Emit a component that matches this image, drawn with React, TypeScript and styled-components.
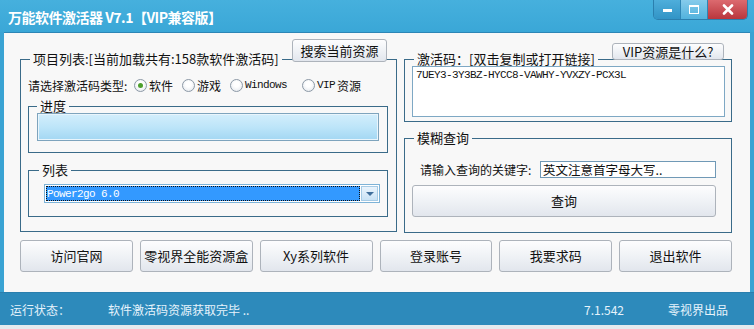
import React from 'react';
import styled, { createGlobalStyle } from 'styled-components';

const GlobalStyle = createGlobalStyle`
  html, body {
    margin: 0;
    padding: 0;
    background: #e4eaee;
  }
  body {
    font-family: "Noto Sans CJK SC", "Liberation Sans", sans-serif;
    font-size: 12px;
    color: #111;
  }
  * {
    box-sizing: border-box;
  }
`;

const Window = styled.div`
  width: 754px;
  height: 325px;
  display: flex;
  flex-direction: column;
  background: #3aa3d3;
`;

const TitleBar = styled.div`
  height: 32px;
  flex: none;
  display: flex;
  justify-content: space-between;
  padding-left: 8px;
  background: linear-gradient(#46b0dd, #3aa7d7);
`;

const Title = styled.div`
  align-self: center;
  color: #fff;
  font-size: 14px;
  font-weight: bold;
  letter-spacing: -0.5px;
  line-height: 16px;
  margin-top: 2px;
`;

const CaptionButtons = styled.div`
  display: flex;
  height: 20px;
  margin-right: 6px;
  border: 1px solid #2b7fae;
  border-top: none;
  border-radius: 0 0 5px 5px;
  overflow: hidden;
`;

const captionBg = {
  min: 'linear-gradient(#4eaedb, #3294c6)',
  max: 'linear-gradient(#86cbeb, #52b2dd)',
  close: 'linear-gradient(#dc6a6f, #b9363d)',
};

const CaptionButton = styled.div<{ $kind: 'min' | 'max' | 'close' }>`
  width: ${(p) => (p.$kind === 'close' ? 40 : p.$kind === 'max' ? 27 : 26)}px;
  display: flex;
  align-items: center;
  justify-content: center;
  background: ${(p) => captionBg[p.$kind]};
  border-left: ${(p) => (p.$kind === 'min' ? 'none' : '1px solid #2f86b5')};
`;

const MinGlyph = styled.span`
  width: 9px;
  height: 3px;
  background: #fff;
  margin-top: 2px;
`;

const MaxGlyph = styled.span`
  width: 10px;
  height: 9px;
  border: 1px solid #fff;
  border-top-width: 2px;
`;

const Body = styled.div`
  flex: 1;
  margin: 0 4px;
  background: #f8f8f8;
  border-top: 1px solid #2d86b6;
  padding: 19px 18px 0 16px;
  display: flex;
  flex-direction: column;
`;

const Columns = styled.div`
  display: grid;
  grid-template-columns: 377px 328px;
  gap: 7px;
  align-items: start;
`;

const RightCol = styled.div`
  display: flex;
  flex-direction: column;
  gap: 9px;
`;

const Group = styled.fieldset<{ $mt?: number }>`
  position: relative;
  margin: ${(p) => p.$mt ?? 0}px 0 0;
  padding: 0;
  min-width: 0;
  border: 1px solid #3a6b89;
`;

const Legend = styled.legend<{ $indent?: number }>`
  margin-left: ${(p) => p.$indent ?? 9}px;
  padding: 0 3px;
  font-size: 13px;
  line-height: 14px;
  color: #111;
`;

const GroupBody = styled.div<{ $pad: string }>`
  padding: ${(p) => p.$pad};
`;

const Button = styled.button<{ $h?: number; $full?: boolean }>`
  height: ${(p) => p.$h ?? 32}px;
  width: ${(p) => (p.$full ? '100%' : 'auto')};
  margin: 0;
  padding: 0;
  border: 1px solid #adb3bb;
  border-radius: 3px;
  background: linear-gradient(#fdfdfe, #eef1f5 55%, #e2e6ed);
  font-family: "Noto Sans CJK SC", "Liberation Sans", sans-serif;
  font-size: 13px;
  line-height: 14px;
  color: #111;
  white-space: nowrap;
`;

/* sits across the group's top border, like the WinForms original */
const HeaderButton = styled(Button)<{ $w: number; $top: number; $right: number }>`
  position: absolute;
  width: ${(p) => p.$w}px;
  top: ${(p) => p.$top}px;
  right: ${(p) => p.$right}px;
`;

const RadioRow = styled.div`
  display: flex;
  align-items: center;
  height: 20px;
`;

const RadioCaption = styled.span`
  width: 106px;
  white-space: nowrap;
`;

const RadioItem = styled.label<{ $w?: number }>`
  display: flex;
  align-items: center;
  gap: 2px;
  width: ${(p) => (p.$w ? `${p.$w}px` : 'auto')};
  white-space: nowrap;
`;

const RadioDot = styled.span<{ $on?: boolean }>`
  width: 13px;
  height: 13px;
  border-radius: 50%;
  border: 1px solid #8c99a6;
  background: radial-gradient(circle at 50% 40%, #fff 30%, #dfe4ea);
  display: flex;
  align-items: center;
  justify-content: center;
  &::after {
    content: '';
    width: 5px;
    height: 5px;
    border-radius: 50%;
    background: ${(p) => (p.$on ? '#4d9f2d' : 'transparent')};
  }
`;

const Mono = styled.span`
  font-family: "Liberation Mono", monospace;
  font-size: 11px;
  letter-spacing: -0.6px;
`;

const Progress = styled.div`
  height: 28px;
  border: 1px solid #7ea4bd;
  box-shadow: inset 0 0 0 1px #e9f5fc;
  background: linear-gradient(#d3eefc, #bde5f9 50%, #a3d7f3);
`;

const Combo = styled.div`
  height: 19px;
  display: flex;
  border: 1px solid #7db3d7;
  background: #fff;
  padding: 1px;
`;

const ComboValue = styled.div`
  flex: 1;
  background: #3399ff;
  outline: 1px dotted #111;
  outline-offset: -1px;
  color: #fff;
  padding-left: 1px;
  display: flex;
  align-items: center;
  font-family: "Liberation Mono", monospace;
  font-size: 11px;
  letter-spacing: -0.6px;
`;

const ComboArrow = styled.div`
  width: 17px;
  margin-left: 1px;
  border: 1px solid #a6cbe5;
  background: linear-gradient(#eaf4fc, #c9e2f5);
  display: flex;
  align-items: center;
  justify-content: center;
  &::after {
    content: '';
    border-left: 4px solid transparent;
    border-right: 4px solid transparent;
    border-top: 4px solid #3f6e9c;
  }
`;

const CodeBox = styled.div`
  margin-top: 0;
  height: 51px;
  border: 1px solid #7ea8c4;
  background: #fff;
  padding: 1px 3px;
  font-family: "Liberation Mono", monospace;
  font-size: 11px;
  letter-spacing: -0.6px;
  line-height: 14px;
`;

const QueryRow = styled.div`
  display: flex;
  align-items: center;
  height: 17px;
  margin-bottom: 7px;
`;

const QueryLabel = styled.span`
  width: 128px;
  padding-left: 8px;
  white-space: nowrap;
`;

const QueryInput = styled.div`
  flex: 1;
  height: 17px;
  border: 1px solid #7099b6;
  background: #fff;
  padding-left: 2px;
  font-size: 12.5px;
  line-height: 15px;
  white-space: nowrap;
`;

const ButtonRow = styled.div`
  display: grid;
  grid-template-columns: repeat(6, 1fr);
  gap: 7px;
  margin-top: 7px;
`;

const StatusBar = styled.div`
  height: 33px;
  flex: none;
  display: flex;
  align-items: center;
  padding: 0 26px 0 10px;
  background: #2d8abb;
  border-top: 1px solid #2a7fae;
  color: #e6f3fb;
  font-size: 12px;
`;

const StatusCell = styled.span<{ $w?: number; $grow?: boolean; $gap?: number }>`
  width: ${(p) => (p.$w ? `${p.$w}px` : 'auto')};
  flex: ${(p) => (p.$grow ? 1 : 'none')};
  margin-right: ${(p) => p.$gap ?? 0}px;
  white-space: nowrap;
`;

const bottomButtons = ['访问官网', '零视界全能资源盒', 'Xy系列软件', '登录账号', '我要求码', '退出软件'];

export default function App() {
  return (
    <>
      <GlobalStyle />
      <Window>
        <TitleBar>
          <Title>万能软件激活器 V7.1【VIP兼容版】</Title>
          <CaptionButtons>
            <CaptionButton $kind="min">
              <MinGlyph />
            </CaptionButton>
            <CaptionButton $kind="max">
              <MaxGlyph />
            </CaptionButton>
            <CaptionButton $kind="close">
              <svg width="12" height="11" viewBox="0 0 12 11">
                <path d="M2 1.5 L10 9.5 M10 1.5 L2 9.5" stroke="#fff" strokeWidth="2.6" strokeLinecap="round" />
              </svg>
            </CaptionButton>
          </CaptionButtons>
        </TitleBar>

        <Body>
          <Columns>
            <Group>
              <Legend>项目列表:[当前加载共有:158款软件激活码]</Legend>
              <HeaderButton $h={23} $w={95} $top={-27} $right={9}>
                搜索当前资源
              </HeaderButton>
              <GroupBody $pad="9px 8px 14px 7px">
                <RadioRow>
                  <RadioCaption>请选择激活码类型:</RadioCaption>
                  <RadioItem $w={48}>
                    <RadioDot $on />
                    软件
                  </RadioItem>
                  <RadioItem $w={48}>
                    <RadioDot />
                    游戏
                  </RadioItem>
                  <RadioItem $w={72}>
                    <RadioDot />
                    <Mono>Windows</Mono>
                  </RadioItem>
                  <RadioItem>
                    <RadioDot />
                    <Mono>VIP</Mono>资源
                  </RadioItem>
                </RadioRow>
                <Group $mt={4}>
                  <Legend $indent={8}>进度</Legend>
                  <GroupBody $pad="0 8px 11px 8px">
                    <Progress />
                  </GroupBody>
                </Group>
                <Group $mt={10}>
                  <Legend $indent={10}>列表</Legend>
                  <GroupBody $pad="7px 7px 13px 15px">
                    <Combo>
                      <ComboValue>Power2go 6.0</ComboValue>
                      <ComboArrow />
                    </Combo>
                  </GroupBody>
                </Group>
              </GroupBody>
            </Group>

            <RightCol>
              <Group>
                <Legend>激活码：[双击复制或打开链接]</Legend>
                <HeaderButton $h={17} $w={112} $top={-23} $right={7}>
                  VIP资源是什么?
                </HeaderButton>
                <GroupBody $pad="0 6px 4px 7px">
                  <CodeBox>7UEY3-3Y3BZ-HYCC8-VAWHY-YVXZY-PCX3L</CodeBox>
                </GroupBody>
              </Group>
              <Group>
                <Legend>模糊查询</Legend>
                <GroupBody $pad="16px 15px 15px 7px">
                  <QueryRow>
                    <QueryLabel>请输入查询的关键字:</QueryLabel>
                    <QueryInput>英文注意首字母大写..</QueryInput>
                  </QueryRow>
                  <Button $full>查询</Button>
                </GroupBody>
              </Group>
            </RightCol>
          </Columns>

          <ButtonRow>
            {bottomButtons.map((label) => (
              <Button key={label}>{label}</Button>
            ))}
          </ButtonRow>
        </Body>

        <StatusBar>
          <StatusCell $w={98}>运行状态：</StatusCell>
          <StatusCell $grow>软件激活码资源获取完毕 ..</StatusCell>
          <StatusCell $gap={44}>7.1.542</StatusCell>
          <StatusCell>零视界出品</StatusCell>
        </StatusBar>
      </Window>
    </>
  );
}
